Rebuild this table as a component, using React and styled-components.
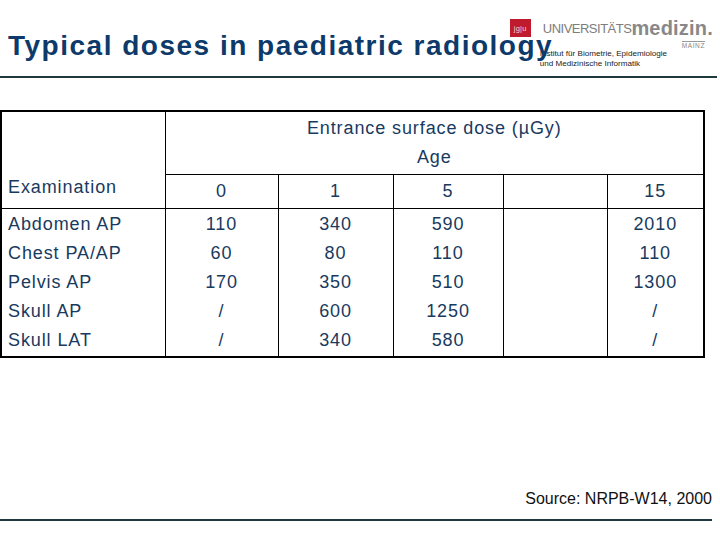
import React from 'react';
import styled, { createGlobalStyle } from 'styled-components';

const GlobalStyle = createGlobalStyle`
    html, body {
        margin: 0;
        padding: 0;
        background: #fff;
    }
    body {
        font-family: "Liberation Sans", Arial, sans-serif;
    }
`

const Page = styled.div`
    width: 720px;
    height: 540px;
    display: flex;
    flex-direction: column;
    overflow: hidden;
`

const Header = styled.header`
    display: grid;
    height: 76px;
    margin-right: 3px;
    border-bottom: 2px solid #1f383e;
`

const Title = styled.h1`
    grid-area: 1 / 1;
    align-self: start;
    justify-self: start;
    z-index: 1;
    margin: 0;
    padding: 30px 0 0 8px;
    font-size: 28px;
    line-height: 32px;
    letter-spacing: 1.5px;
    font-weight: 700;
    color: #0d3a6a;
    white-space: nowrap;
`

const Logo = styled.div`
    grid-area: 1 / 1;
    justify-self: end;
    align-self: start;
    display: flex;
    flex-direction: column;
    padding: 19px 4px 0 0;
`

const LogoTop = styled.div`
    display: flex;
    align-items: center;
    height: 18px;
`

const Mark = styled.div`
    width: 21px;
    height: 18px;
    background: #c01a2e;
    color: #f3d6d9;
    font-size: 7.5px;
    display: flex;
    align-items: center;
    justify-content: center;
    letter-spacing: 0.2px;
`

const Univ = styled.span`
    margin-left: 12px;
    font-size: 13px;
    letter-spacing: -0.5px;
    color: #7d7d7d;
`

const Med = styled.span`
    font-size: 20px;
    font-weight: 700;
    color: #888;
    letter-spacing: 0.2px;
`

const Mainz = styled.div`
    align-self: flex-end;
    margin: 4px 8px 0 0;
    padding-top: 1px;
    border-top: 1px solid #999;
    font-size: 6.5px;
    line-height: 6px;
    letter-spacing: 0.6px;
    color: #888;
`

const Sub = styled.div`
    margin-left: 30px;
    font-size: 8.1px;
    line-height: 10px;
    color: #222;
    white-space: nowrap;
`

const TableWrap = styled.div`
    margin-top: 32px;
`

const Table = styled.table`
    border-collapse: collapse;
    table-layout: fixed;
    width: 703px;
    border: 2px solid #000;
    color: #183a5e;
    font-size: 18px;
    letter-spacing: 0.9px;
`

const HeadCell = styled.th`
    font-weight: 400;
    padding: 0;
    text-align: ${(p) => p.$align || 'center'};
    vertical-align: ${(p) => p.$valign || 'middle'};
    border: 1px solid #000;
    height: ${(p) => p.$h || 'auto'};
    padding-left: ${(p) => (p.$align === 'left' ? '6px' : '0')};
    padding-bottom: ${(p) => p.$pb || '0'};
`

const HeadLine = styled.div`
    line-height: 29px;
`

const BodyCell = styled.td`
    padding: 0;
    height: ${(p) => p.$h}px;
    line-height: 29px;
    text-align: ${(p) => (p.$first ? 'left' : 'center')};
    padding-left: ${(p) => (p.$first ? '6px' : '0')};
    border-left: 1px solid #000;
    border-top: ${(p) => (p.$top ? '1px solid #000' : 'none')};
    vertical-align: ${(p) => p.$valign};
`

const Footer = styled.footer`
    margin-top: auto;
    margin-right: 7px;
    display: flex;
    flex-direction: column;
    padding-bottom: 19px;
`

const Source = styled.div`
    align-self: flex-end;
    margin-right: 1px;
    font-size: 16px;
    line-height: 18px;
    color: #111;
    padding-bottom: 11px;
    border-bottom: 2px solid #1f383e;
    width: 100%;
    text-align: right;
`

const ages = ['0', '1', '5', '', '15']

const rows = [
    ['Abdomen AP', '110', '340', '590', '', '2010'],
    ['Chest PA/AP', '60', '80', '110', '', '110'],
    ['Pelvis AP', '170', '350', '510', '', '1300'],
    ['Skull AP', '/', '600', '1250', '', '/'],
    ['Skull LAT', '/', '340', '580', '', '/'],
]

export default function App() {
    return (
        <>
            <GlobalStyle />
            <Page>
                <Header>
                    <Logo>
                        <LogoTop>
                            <Mark>jg|u</Mark>
                            <Univ>UNIVERSITÄTS</Univ>
                            <Med>medizin.</Med>
                        </LogoTop>
                        <Mainz>MAINZ</Mainz>
                        <Sub>Institut für Biometrie, Epidemiologie</Sub>
                        <Sub>und Medizinische Informatik</Sub>
                    </Logo>
                    <Title>Typical doses in paediatric radiology</Title>
                </Header>

                <TableWrap>
                    <Table>
                        <colgroup>
                            <col style={{ width: 164 }} />
                            <col style={{ width: 113 }} />
                            <col style={{ width: 115 }} />
                            <col style={{ width: 110 }} />
                            <col style={{ width: 104 }} />
                            <col style={{ width: 97 }} />
                        </colgroup>
                        <thead>
                            <tr>
                                <HeadCell rowSpan={2} $align="left" $valign="bottom" $pb="10px">
                                    Examination
                                </HeadCell>
                                <HeadCell colSpan={5} $h="62px" $valign="top">
                                    <HeadLine style={{ marginTop: 2 }}>Entrance surface dose (µGy)</HeadLine>
                                    <HeadLine>Age</HeadLine>
                                </HeadCell>
                            </tr>
                            <tr>
                                {ages.map((a, i) => (
                                    <HeadCell key={i} $h="33px">{a}</HeadCell>
                                ))}
                            </tr>
                        </thead>
                        <tbody>
                            {rows.map((r, ri) => (
                                <tr key={ri}>
                                    {r.map((c, ci) => (
                                        <BodyCell
                                            key={ci}
                                            $first={ci === 0}
                                            $top={ri === 0}
                                            $h={ri === 0 || ri === rows.length - 1 ? 30 : 29}
                                            $valign={ri === 0 ? 'bottom' : 'top'}
                                        >
                                            {c}
                                        </BodyCell>
                                    ))}
                                </tr>
                            ))}
                        </tbody>
                    </Table>
                </TableWrap>

                <Footer>
                    <Source>Source: NRPB-W14, 2000</Source>
                </Footer>
            </Page>
        </>
    );
}
